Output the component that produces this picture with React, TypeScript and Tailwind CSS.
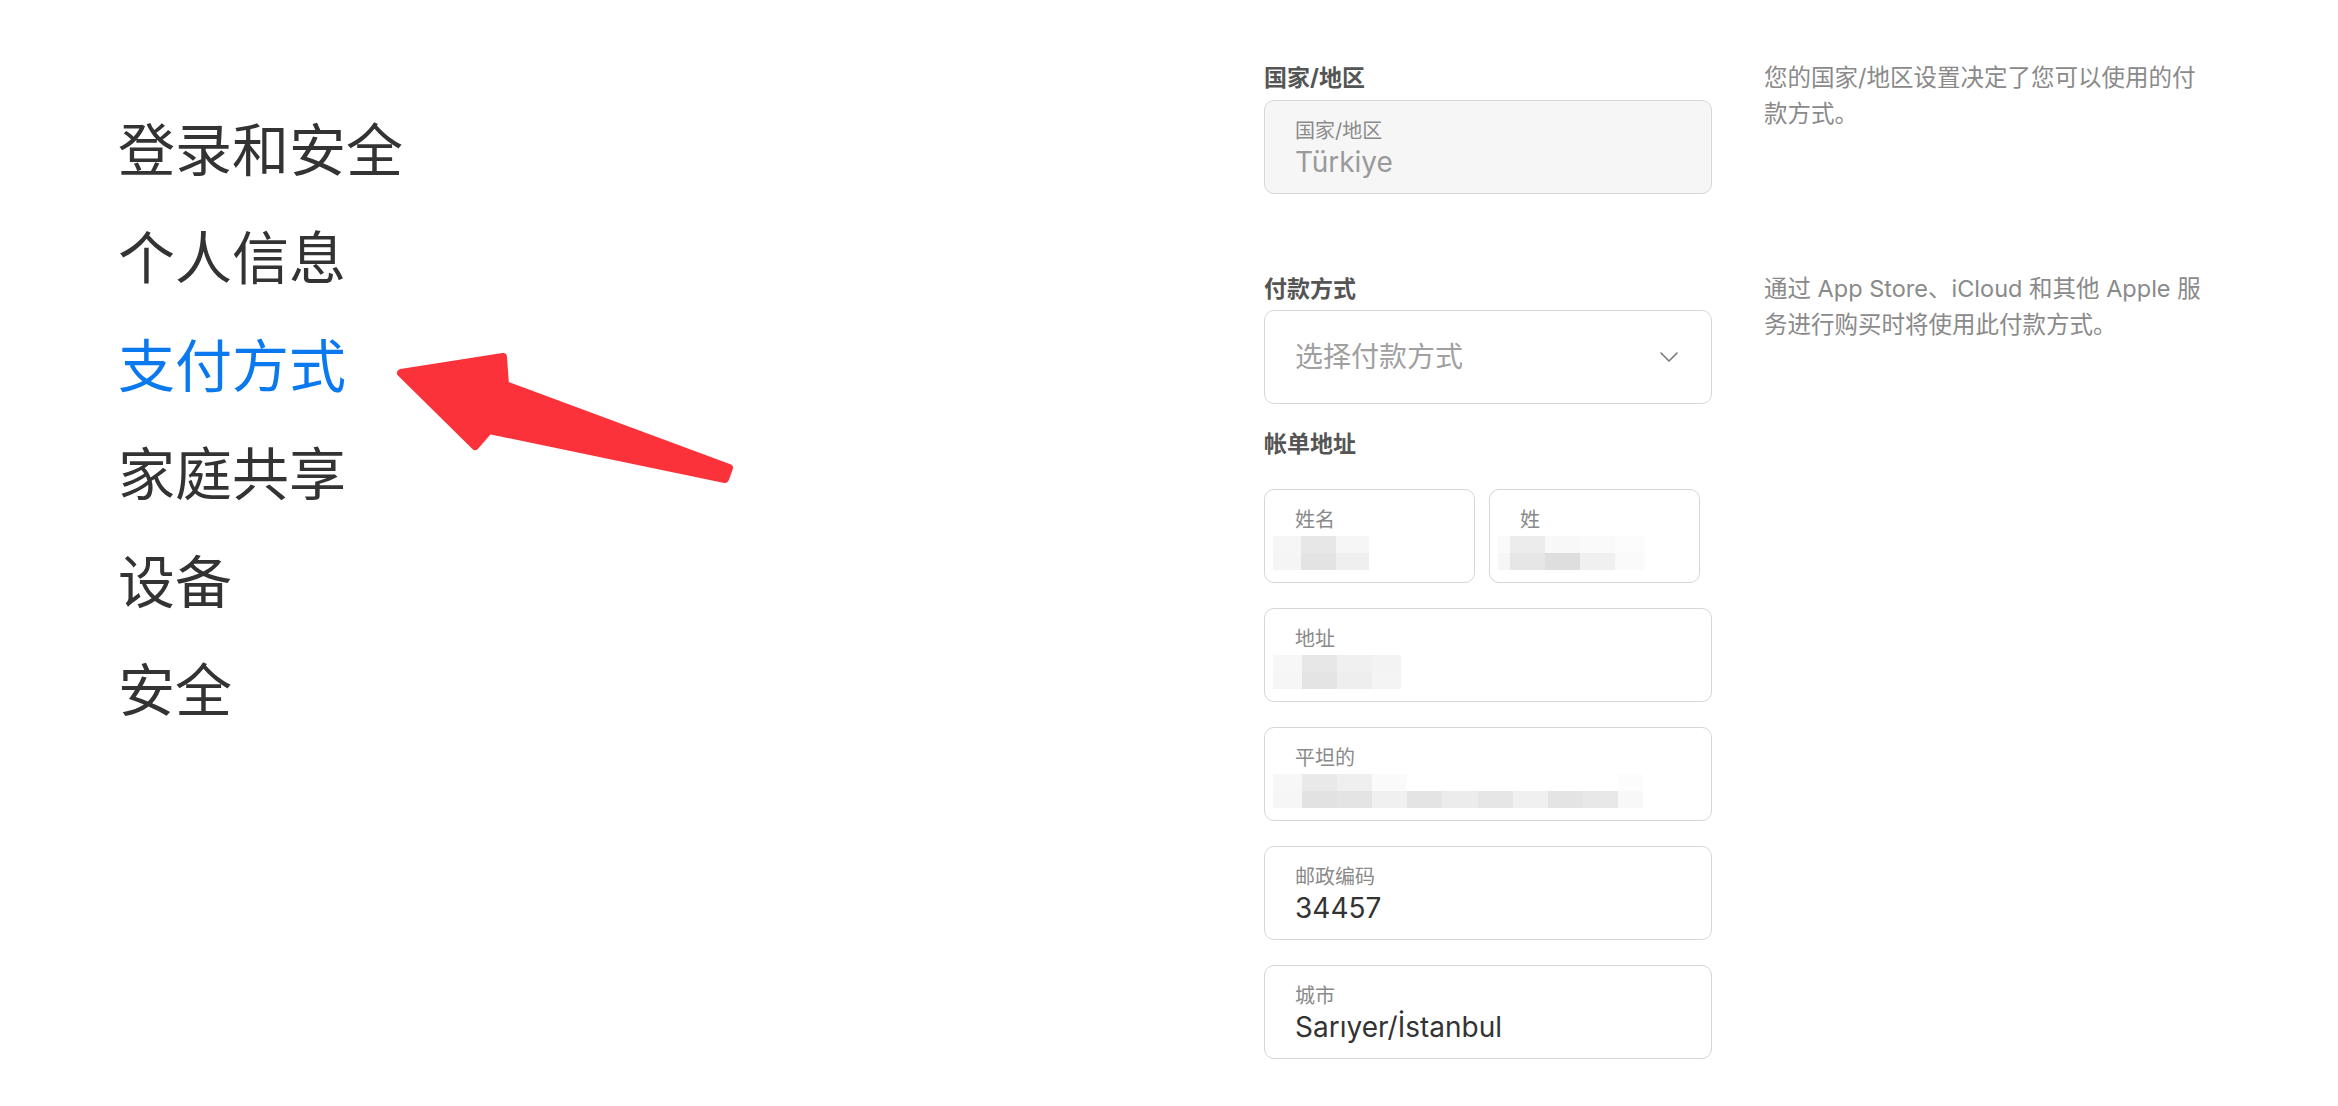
import React from 'react';

type Cell = { w: number; a: string; b: string };

const navItems = ['登录和安全', '个人信息', '支付方式', '家庭共享', '设备', '安全'];

const font = { fontFamily: 'Inter, "Noto Sans CJK SC", sans-serif' };

function Mosaic({ cells, offset = -22 }: { cells: Cell[]; offset?: number }) {
  return (
    <div className="flex mt-[4px]" style={{ marginLeft: offset }}>
      {cells.map((c, i) => (
        <div key={i} className="flex flex-col">
          <div className="h-[17px]" style={{ width: c.w, background: c.a }} />
          <div className="h-[17px]" style={{ width: c.w, background: c.b }} />
        </div>
      ))}
    </div>
  );
}

function Field({ label, value, muted, children, className = '' }: { label: string; value?: string; muted?: boolean; children?: React.ReactNode; className?: string }) {
  return (
    <div className={`h-[94px] rounded-[10px] border border-[#d6d6d6] px-[30px] pt-[18px] flex flex-col ${muted ? 'bg-[#f6f6f6]' : 'bg-white'} ${className}`}>
      <span className="text-[20px] leading-[24px] text-[#8a8a8a]">{label}</span>
      {value && (
        <span className={`text-[28px] leading-[34px] mt-[2px] ${muted ? 'text-[#9a9a9a]' : 'text-[#333]'}`}>{value}</span>
      )}
      {children}
    </div>
  );
}

export default function App() {
  return (
    <div className="relative min-h-screen w-full bg-white overflow-hidden" style={font}>
      <div className="flex pl-[118px]">
        <nav className="w-[1146px] pt-[97px] flex flex-col">
          {navItems.map(item => (
            <span
              key={item}
              className={`text-[57px] leading-[108px] ${item === '支付方式' ? 'text-[#0a78ee]' : 'text-[#333]'}`}
            >
              {item}
            </span>
          ))}
        </nav>

        <main className="pt-[64px] flex flex-col">
          <div className="flex gap-[52px]">
            <div className="w-[448px]">
              <h4 className="text-[23px] leading-[28px] font-bold text-[#555] mb-[8px]">国家/地区</h4>
              <Field label="国家/地区" value="Türkiye" muted />
            </div>
            <p className="w-[450px] -mt-[4px] text-[23.5px] leading-[36px] text-[#8a8a8a]">
              您的国家/地区设置决定了您可以使用的付<br />款方式。
            </p>
          </div>

          <div className="flex gap-[52px] mt-[81px]">
            <div className="w-[448px]">
              <h4 className="text-[23px] leading-[28px] font-bold text-[#555] mb-[7px]">付款方式</h4>
              <div className="h-[94px] rounded-[10px] border border-[#d6d6d6] bg-white pl-[30px] pr-[33px] flex items-center justify-between">
                <span className="text-[28px] text-[#a0a0a0]">选择付款方式</span>
                <svg width="18" height="10" viewBox="0 0 18 10" fill="none">
                  <path d="M1 1l8 8 8-8" stroke="#777" strokeWidth="1.6" strokeLinecap="round" strokeLinejoin="round" />
                </svg>
              </div>
            </div>
            <p className="w-[470px] -mt-[4px] text-[23.5px] leading-[36px] text-[#8a8a8a]">
              通过 App Store、iCloud 和其他 Apple 服<br />务进行购买时将使用此付款方式。
            </p>
          </div>

          <div className="w-[448px] mt-[26px]">
            <h4 className="text-[23px] leading-[28px] font-bold text-[#555]">帐单地址</h4>
            <div className="mt-[31px] flex flex-col gap-[25px]">
              <div className="flex gap-[14px]">
                <Field label="姓名" className="w-[211px]">
                  <Mosaic
                    cells={[
                      { w: 28, a: '#f6f6f6', b: '#f5f5f5' },
                      { w: 35, a: '#e7e7e7', b: '#e3e3e3' },
                      { w: 33, a: '#f6f6f6', b: '#efefef' },
                    ]}
                  />
                </Field>
                <Field label="姓" className="w-[211px]">
                  <Mosaic
                    cells={[
                      { w: 12, a: '#fafafa', b: '#f6f6f6' },
                      { w: 35, a: '#ececec', b: '#e6e6e6' },
                      { w: 35, a: '#f8f8f8', b: '#dedede' },
                      { w: 35, a: '#fafafa', b: '#f0f0f0' },
                      { w: 30, a: '#fcfcfc', b: '#fafafa' },
                    ]}
                  />
                </Field>
              </div>
              <Field label="地址">
                <Mosaic
                  cells={[
                    { w: 29, a: '#f7f7f7', b: '#f6f6f6' },
                    { w: 35, a: '#e7e7e7', b: '#e4e4e4' },
                    { w: 35, a: '#f0f0f0', b: '#eeeeee' },
                    { w: 29, a: '#f3f3f3', b: '#f4f4f4' },
                  ]}
                />
              </Field>
              <Field label="平坦的">
                <Mosaic
                  cells={[
                    { w: 29, a: '#f7f7f7', b: '#f6f6f6' },
                    { w: 35, a: '#e9e9e9', b: '#e2e2e2' },
                    { w: 35, a: '#efefef', b: '#e4e4e4' },
                    { w: 35, a: '#fafafa', b: '#f0f0f0' },
                    { w: 35, a: '#ffffff', b: '#e4e4e4' },
                    { w: 36, a: '#ffffff', b: '#ececec' },
                    { w: 35, a: '#ffffff', b: '#e6e6e6' },
                    { w: 35, a: '#ffffff', b: '#f0f0f0' },
                    { w: 35, a: '#ffffff', b: '#e4e4e4' },
                    { w: 35, a: '#ffffff', b: '#e8e8e8' },
                    { w: 25, a: '#fcfcfc', b: '#f8f8f8' },
                  ]}
                />
              </Field>
              <Field label="邮政编码" value="34457" />
              <Field label="城市" value="Sarıyer/İstanbul" />
            </div>
          </div>
        </main>
      </div>

      {/* red annotation arrow */}
      <svg className="absolute left-0 top-0 pointer-events-none" width="800" height="600" viewBox="0 0 800 600">
        <polygon
          points="401,373 503,357 505,385 729,468 725,479 489,430 475,446"
          fill="#fb323a"
          stroke="#fb323a"
          strokeWidth="8"
          strokeLinejoin="round"
        />
      </svg>
    </div>
  );
}
